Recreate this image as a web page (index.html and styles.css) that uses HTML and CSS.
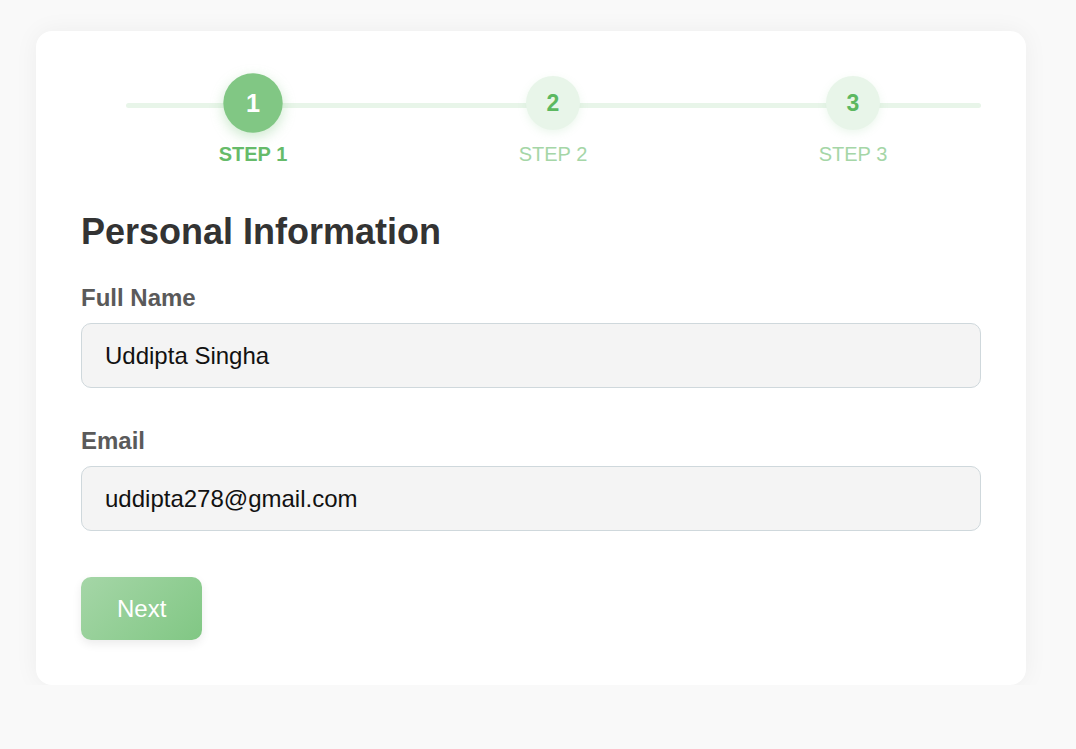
FILE: index.html
```html
<!DOCTYPE html>
<html lang="en">
<head>
<meta charset="utf-8">
<title>Multi-step Form</title>
<link rel="stylesheet" href="styles.css">
</head>
<body>
<div class="card">
  <div class="stepper">
    <div class="step active">
      <div class="circle">1</div>
      <div class="step-label">STEP 1</div>
    </div>
    <div class="step">
      <div class="circle">2</div>
      <div class="step-label">STEP 2</div>
    </div>
    <div class="step">
      <div class="circle">3</div>
      <div class="step-label">STEP 3</div>
    </div>
  </div>
  <h2 class="title">Personal Information</h2>
  <div class="form-group">
    <label class="label" for="name">Full Name</label>
    <input class="input" id="name" type="text" value="Uddipta Singha">
  </div>
  <div class="form-group">
    <label class="label" for="email">Email</label>
    <input class="input" id="email" type="email" value="uddipta278@gmail.com">
  </div>
  <button class="btn" type="button">Next</button>
</div>
</body>
</html>
```
FILE: styles.css
```css
* { box-sizing: border-box; }
html, body { margin: 0; padding: 0; }
body {
  background: #f9f9f9;
  font-family: "Liberation Sans", Arial, sans-serif;
  padding: 31px 0 0 36px;
}
.card {
  width: 990px;
  background: #ffffff;
  border-radius: 16px;
  padding: 45px;
  box-shadow: 0 0 24px rgba(0, 0, 0, 0.05);
}
.stepper {
  position: relative;
  display: flex;
  margin: 0 -22px 45px 22px;
}
.stepper::before {
  content: "";
  position: absolute;
  left: 23px;
  right: 22px;
  top: 27px;
  height: 5px;
  border-radius: 3px;
  background: #e8f5e9;
}
.step {
  flex: 1;
  display: flex;
  flex-direction: column;
  align-items: center;
  position: relative;
  z-index: 1;
}
.circle {
  width: 54px;
  height: 54px;
  border-radius: 50%;
  background: #e8f5e9;
  color: #5cb860;
  font-size: 23px;
  font-weight: bold;
  display: flex;
  align-items: center;
  justify-content: center;
  box-shadow: 0 3px 8px rgba(129, 199, 132, 0.15);
}
.step.active .circle {
  background: #81c784;
  color: #ffffff;
  transform: scale(1.1);
  box-shadow: 0 4px 12px rgba(129, 199, 132, 0.4);
}
.step-label {
  margin-top: 13px;
  font-size: 20px;
  line-height: 23px;
  color: #a5d6a7;
}
.step.active .step-label {
  color: #66bb6a;
  font-weight: bold;
}
.title {
  margin: 0 0 32px;
  font-size: 36px;
  line-height: 41px;
  font-weight: bold;
  color: #333333;
}
.form-group {
  margin-bottom: 39px;
}
.label {
  display: block;
  font-size: 24px;
  line-height: 28px;
  font-weight: bold;
  color: #5a5a5a;
  margin-bottom: 11px;
}
.input {
  display: block;
  width: 100%;
  height: 65px;
  padding: 18px 23px;
  font-family: "Liberation Sans", Arial, sans-serif;
  font-size: 24px;
  line-height: 27px;
  color: #111111;
  background: #f4f4f4;
  border: 1px solid #cfd8dc;
  border-radius: 10px;
  outline: none;
}
.btn {
  margin-top: 46px;
  display: block;
  padding: 18px 36px;
  font-family: "Liberation Sans", Arial, sans-serif;
  font-size: 24px;
  line-height: 27px;
  color: #ffffff;
  border: none;
  border-radius: 10px;
  background: linear-gradient(135deg, #a5d6a7, #81c784);
  box-shadow: 0 4px 10px rgba(0, 0, 0, 0.08);
  cursor: pointer;
}
```
